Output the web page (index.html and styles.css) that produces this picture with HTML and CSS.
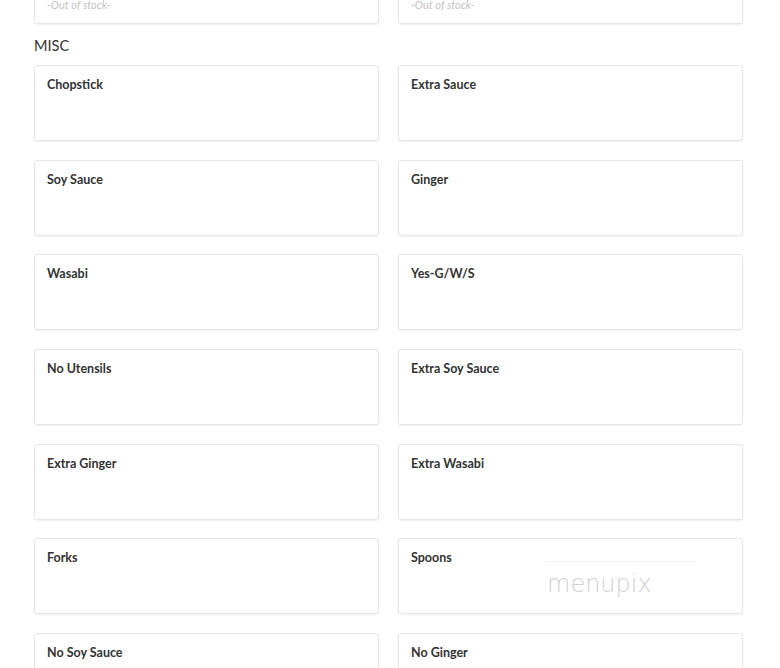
FILE: index.html
```html
<!DOCTYPE html>
<html lang="en">
<head>
    <meta charset="UTF-8">
    <meta name="viewport" content="width=device-width, initial-scale=1.0">
    <title>Menu - Misc</title>
    <link rel="stylesheet" href="styles.css">
</head>
<body>

<div class="menu">
    <div class="items">
        <div class="item">
            <div class="item-name">Miso Soup</div>
            <div class="stock">-Out of stock-</div>
        </div>
        <div class="item">
            <div class="item-name">Salad</div>
            <div class="stock">-Out of stock-</div>
        </div>
    </div>

    <h2 class="category">MISC</h2>
    <div class="items">
        <div class="item"><div class="item-name">Chopstick</div></div>
        <div class="item"><div class="item-name">Extra Sauce</div></div>
        <div class="item"><div class="item-name">Soy Sauce</div></div>
        <div class="item"><div class="item-name">Ginger</div></div>
        <div class="item"><div class="item-name">Wasabi</div></div>
        <div class="item"><div class="item-name">Yes-G/W/S</div></div>
        <div class="item"><div class="item-name">No Utensils</div></div>
        <div class="item"><div class="item-name">Extra Soy Sauce</div></div>
        <div class="item"><div class="item-name">Extra Ginger</div></div>
        <div class="item"><div class="item-name">Extra Wasabi</div></div>
        <div class="item"><div class="item-name">Forks</div></div>
        <div class="item"><div class="item-name">Spoons</div></div>
        <div class="item"><div class="item-name">No Soy Sauce</div></div>
        <div class="item"><div class="item-name">No Ginger</div></div>
    </div>
</div>

<div class="watermark">menupix</div>

</body>
</html>
```

FILE: styles.css
```css
body {
    margin: 0;
    font-family: Lato, "Open Sans", sans-serif;
    background: #fff;
    color: #333;
    overflow: hidden;
}
.menu {
    padding: 0 37px 0 34px;
    margin-top: -52px;
}
.items {
    display: grid;
    grid-template-columns: 1fr 1fr;
    column-gap: 19px;
    row-gap: 18.7px;
}
.item {
    display: flex;
    flex-direction: column;
    box-sizing: border-box;
    height: 76px;
    padding: 11px 12px 11px;
    border: 1px solid #e6e6e6;
    border-radius: 3px;
    box-shadow: 0 1px 2px rgba(0, 0, 0, 0.06);
}
.item-name {
    font-size: 12.5px;
    font-weight: bold;
    color: #333;
    line-height: 16px;
}
.stock {
    margin-top: auto;
    font-size: 11px;
    font-style: italic;
    color: #c4c4c4;
    line-height: 14px;
}
.category {
    margin: 14px 0 11px;
    font-size: 14.5px;
    font-weight: normal;
    line-height: 16px;
    color: #333;
}
.watermark {
    position: absolute;
    left: 547px;
    top: 561px;
    width: 150px;
    border-top: 1px solid #f2f2f2;
    padding-top: 9px;
    font-family: "DejaVu Sans", sans-serif;
    font-size: 24px;
    font-weight: 200;
    color: #d2d2d2;
    line-height: 26px;
}
```
